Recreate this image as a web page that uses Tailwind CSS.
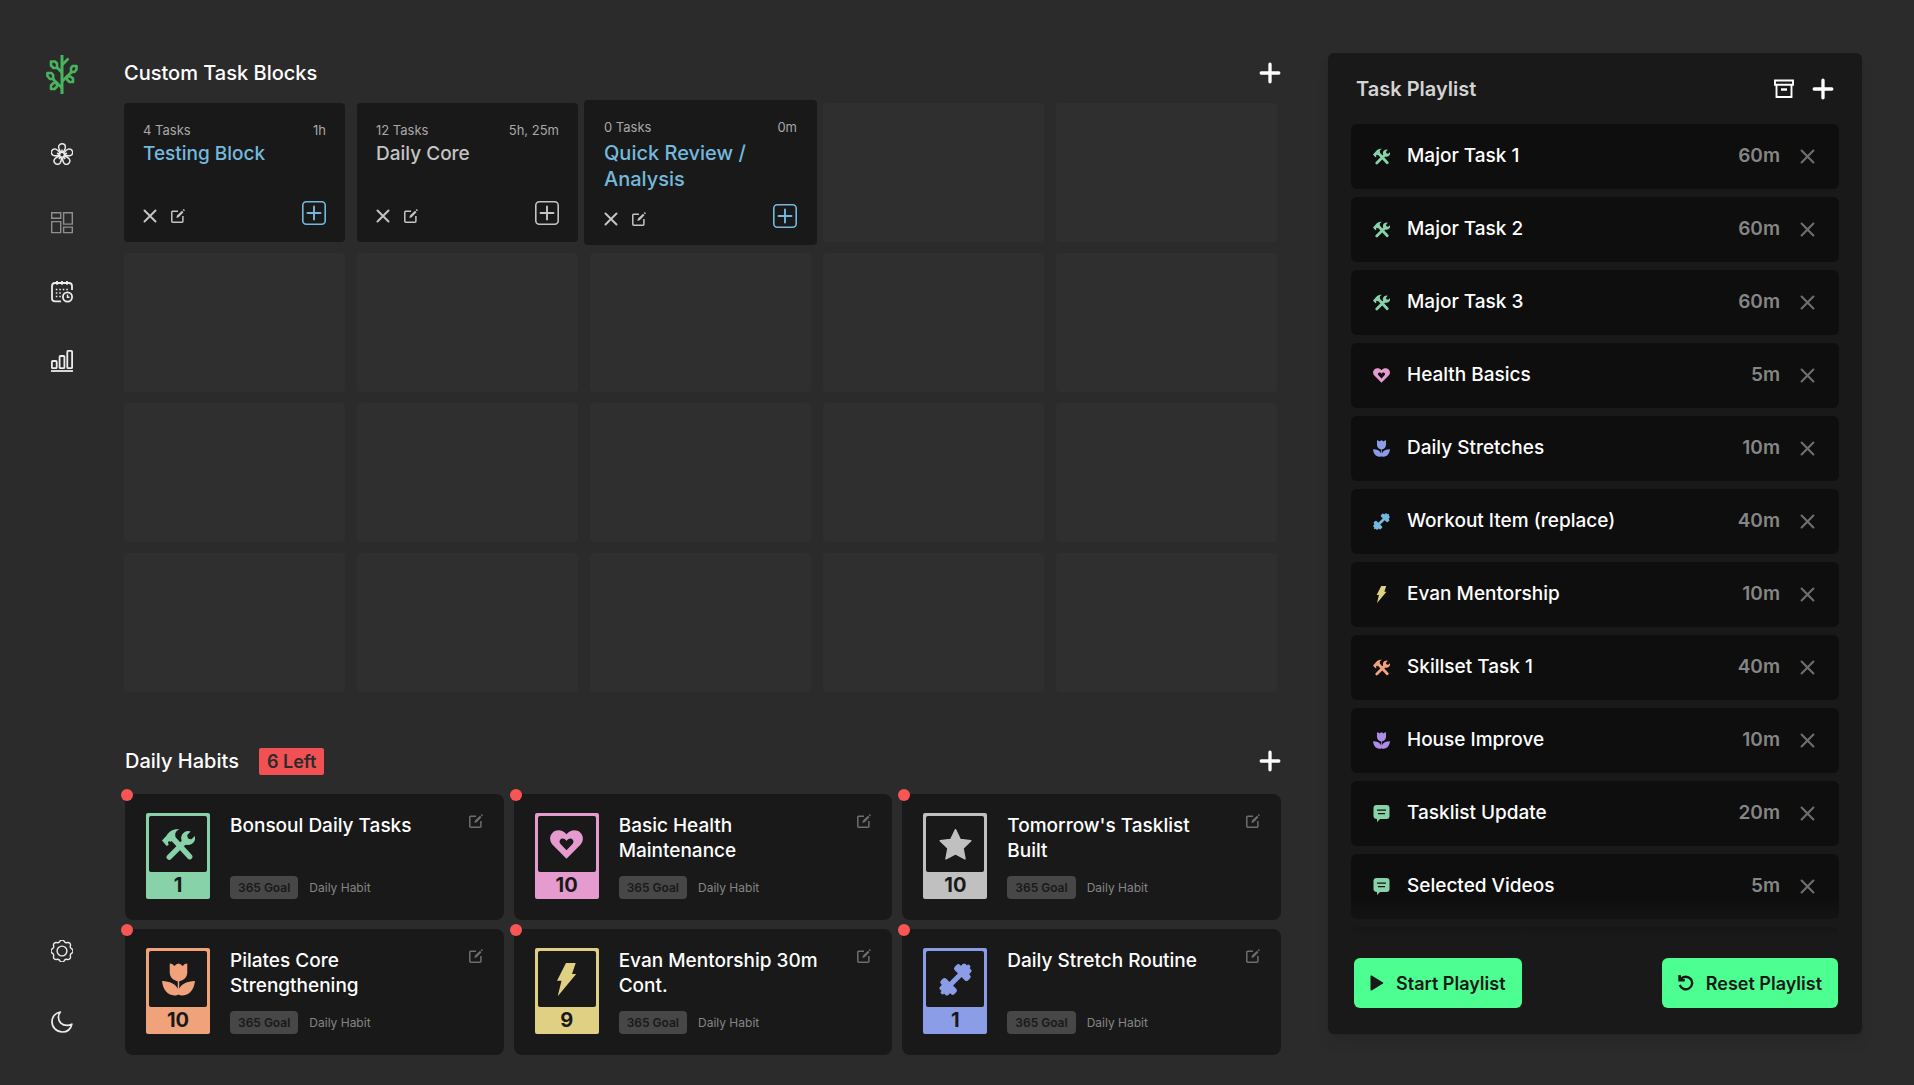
<!doctype html>
<html lang="en">

<head>
  <meta charset="UTF-8" />
  <meta name="viewport" content="width=device-width, initial-scale=1" />
  <title>Task Playlist</title>
  <!-- Tailwind CSS CDN -->
  <script src="https://cdn.jsdelivr.net/npm/@tailwindcss/browser@4"></script>
</head>

<body class="flex h-screen bg-[#2b2b2b] font-['Inter',sans-serif] text-white">
  <!-- Icon sprite -->
  <svg class="hidden">
    <symbol id="i-plus" viewBox="0 0 20 20">
      <path d="M10 2v16M2 10h16" fill="none" stroke="currentColor" stroke-width="3" stroke-linecap="round" />
    </symbol>
    <symbol id="i-x" viewBox="0 0 14 14">
      <path d="M1.500 1.500l11 11M12.500 1.500l-11 11" fill="none" stroke="currentColor" stroke-width="2" stroke-linecap="round" />
    </symbol>
    <symbol id="i-edit" viewBox="0 0 14 14">
      <path d="M7 2.200H1.700Q.8 2.200.8 3.100V12.300Q.8 13.200 1.700 13.200H11Q11.900 13.200 11.900 12.300V7" fill="none" stroke="currentColor" stroke-width="1.500" />
      <path d="M5.300 9l.7-2.400L11 1.700l1.500 1.500L7.700 8.200zM11.700 1l1-1L14 1.300l-1 1z" fill="currentColor" />
    </symbol>
    <symbol id="i-add-box" viewBox="0 0 24 24">
      <rect x=".8" y=".8" width="22.400" height="22.400" rx="3.500" fill="none" stroke="currentColor" stroke-width="1.600" />
      <path d="M12 5.500v13M5.500 12h13" fill="none" stroke="currentColor" stroke-width="1.900" stroke-linecap="round" />
    </symbol>
    <symbol id="i-tools" viewBox="0 0 34 33">
      <path d="M0 12.500L5 7C7 3 12 0 18 1c-4 1.500-5 4-4 8l-5 5-1.500-1-1.300 1 .6 3-2 1z" fill="currentColor" />
      <path d="M11 10l17.500 19M7.500 29.500L25 12" stroke="currentColor" stroke-width="5.600" stroke-linecap="round" />
      <path d="M29.500 3.200L26 6.800l.6 3.800 3.800.6 3.400-3.400A7.200 7.200 0 1 1 29.500 3.200z" fill="currentColor" />
    </symbol>
    <symbol id="i-tulip" viewBox="0 0 32 32">
      <path d="M7.500.5Q10 .5 12 2.800 14 1 16 .5 18 1 20 2.800 22 .5 24.500.5V9c0 5-3.500 8-8.500 9-5-1-8.500-4-8.500-9z" fill="currentColor" />
      <path d="M0 17.500c8 .5 13 2.500 15.300 7.500V17h1.400v8c2.300-5 7.300-7 15.300-7.500-1 8.500-5 13.500-12 14-1.500 0-3-.3-4-1-1 .7-2.500 1-4 1-7-.5-11-5.500-12-14z" fill="currentColor" />
    </symbol>
    <symbol id="i-heart" viewBox="0 0 32 28">
      <path fill-rule="evenodd" d="M16 27.800L2.500 14.200C-.8 10.700-.6 5.500 2.500 2.500 6-.8 12-.8 16 4c4-4.800 10-4.800 13.500-1.500 3.100 3 3.300 8.200 0 11.700zM16 19.500l5.800-5.900c2-2.200.5-5.400-2-5.400-1.700 0-3 1-3.800 2.300C15.200 9.200 13.900 8.200 12.200 8.200c-2.500 0-4 3.200-2 5.400z" fill="currentColor" />
    </symbol>
    <symbol id="i-bolt" viewBox="-7 0 33 33">
      <path d="M9 0h9.700L15 11h4.200L.7 33.300 4.500 17.700H0z" fill="currentColor" />
    </symbol>
    <symbol id="i-star" viewBox="0 0 34 33">
      <path d="M17 1.200l4.800 10 11 1.500-8 7.700 2 11L17 26.200 7.200 31.400l2-11-8-7.700 11-1.500z" fill="currentColor" stroke="currentColor" stroke-width="1.500" stroke-linejoin="round" />
    </symbol>
    <symbol id="i-dumbbell" viewBox="-16.500 -16.500 33 33">
      <g transform="rotate(-45)" fill="currentColor">
        <rect x="-9" y="-2.500" width="18" height="5" />
        <rect x="6" y="-9.500" width="7.500" height="19" rx="2.500" />
        <rect x="11" y="-5.800" width="7" height="11.600" rx="2" />
        <rect x="16" y="-1.800" width="4" height="3.600" rx="1" />
        <rect x="-13.500" y="-9.500" width="7.500" height="19" rx="2.500" />
        <rect x="-18" y="-5.800" width="7" height="11.600" rx="2" />
        <rect x="-20" y="-1.800" width="4" height="3.600" rx="1" />
      </g>
    </symbol>
    <symbol id="i-chat" viewBox="0 0 16 17">
      <path fill-rule="evenodd" d="M3 0h10q3 0 3 3v8q0 3-3 3H6.500L3.500 17v-3Q0 14 0 11V3q0-3 3-3zM3.500 4.500v1.300h9V4.500zM4.500 8v1.300h7V8z" fill="currentColor" />
    </symbol>
    <symbol id="i-archive" viewBox="0 0 20 20">
      <path d="M1 1.500h18v4.300H1zM2.500 6v12h15V6" fill="none" stroke="currentColor" stroke-width="1.900" />
      <path d="M7 10.500h6" stroke="currentColor" stroke-width="2.400" />
    </symbol>
    <symbol id="i-play" viewBox="0 0 14 16">
      <path d="M.5 1.200v13.600q0 1.200 1.200.6L13 8.600q.8-.6 0-1.200L1.700.6Q.5 0 .5 1.200z" fill="currentColor" />
    </symbol>
    <symbol id="i-reset" viewBox="0 0 16 16">
      <path d="M2.800 4.200A6.300 6.300 0 1 1 1.800 9.800" fill="none" stroke="currentColor" stroke-width="2.400" />
      <path d="M.3 0v6.400h6.500V4H3.500L2.700 0z" fill="currentColor" />
    </symbol>
  </svg>

  <!-- Sidebar -->
  <nav class="flex w-[124px] shrink-0 flex-col items-center pt-[55px] pb-[52px] text-[#ececec]">
    <a href="#" aria-label="Home" class="text-[#4bb35c]">
      <svg class="h-[39px] w-8" viewBox="0 0 32 39" fill="none" stroke="currentColor" stroke-width="2.600" stroke-linejoin="round">
        <path d="M16 0v39" stroke-width="3" />
        <path d="M16 10l6.500-6.500M16 17.500l-5.500-5.500M16 33L6.500 23.500M16 26.500L26.500 16" />
        <path d="M5 6.500h4l2 2V13H7.500L5 10.500zM1.400 18h4l1.800 2v4H4L1.400 21zM26.500 11h4v3.500l-2 2.500H25v-4zM5 34v-3.500l2.500-2.500H11v3.500L8.500 34zM21 21.500h3.500l2.500 2V27h-3.500L21 24.500z" />
      </svg>
    </a>
    <div class="mt-[49px] flex flex-col gap-[47px]">
      <a href="#" aria-label="Garden">
        <svg class="size-[22px]" viewBox="0 0 24 24" fill="none" stroke="currentColor" stroke-width="1.600">
          <circle cx="12" cy="12.800" r="2.600" />
          <path id="petal" d="M10.800 10.200C9.500 8.500 8.300 6.500 8.300 4.500 8.300 2.300 10 .8 12 .8s3.700 1.500 3.700 3.700c0 2-1.200 4-2.500 5.700M12 7v3" />
          <use href="#petal" transform="rotate(72 12 12.800)" />
          <use href="#petal" transform="rotate(144 12 12.800)" />
          <use href="#petal" transform="rotate(216 12 12.800)" />
          <use href="#petal" transform="rotate(288 12 12.800)" />
        </svg>
      </a>
      <a href="#" aria-label="Task blocks" class="text-[#8f8f8f]">
        <svg class="size-[22px]" viewBox="0 0 22 22" fill="none" stroke="currentColor" stroke-width="1.400">
          <path d="M.7.700h9v5.500h-9zM.7 9.600h9v11h-9zM12.600.7h8.700v11.400h-8.700zM12.600 15.100h8.700v5.500h-8.700z" />
        </svg>
      </a>
      <a href="#" aria-label="Schedule">
        <svg class="size-[22px]" viewBox="0 0 22 22" fill="none" stroke="currentColor" stroke-width="1.800">
          <path d="M10 20.400H4q-3 0-3-3V5q0-3 3-3h14q3 0 3 3v4M6 0v3.800M11 0v3.800M16 0v3.800" />
          <circle cx="16.500" cy="16" r="4.600" />
          <path d="M16.500 13.500v2.800h2" stroke-width="1.400" />
          <path d="M4.800 8.500h13M4.800 12h6.500M4.800 15.500h5" stroke-dasharray="1.500 2" stroke-width="1.500" />
        </svg>
      </a>
      <a href="#" aria-label="Statistics">
        <svg class="size-[22px]" viewBox="0 0 22 22" fill="none" stroke="currentColor" stroke-width="1.800">
          <path d="M0 21h22" />
          <rect x=".9" y="11" width="4.800" height="7.200" rx=".8" />
          <rect x="8.600" y="6" width="4.800" height="12.200" rx=".8" />
          <rect x="16.300" y=".9" width="4.800" height="17.300" rx=".8" />
        </svg>
      </a>
    </div>
    <div class="mt-auto flex flex-col gap-[49px]">
      <a href="#" aria-label="Settings">
        <svg class="size-[22px]" viewBox="1 1 22 22" fill="none" stroke="currentColor" stroke-width="1.400">
          <circle cx="12" cy="12" r="4.900" />
          <path d="M22.100 10.030A2.600 2.600 0 0 1 22.100 13.970A2.800 2.800 0 0 0 20.540 17.760A2.600 2.600 0 0 1 17.760 20.540A2.800 2.800 0 0 0 13.970 22.100A2.600 2.600 0 0 1 10.030 22.100A2.800 2.800 0 0 0 6.240 20.540A2.600 2.600 0 0 1 3.460 17.760A2.800 2.800 0 0 0 1.900 13.970A2.600 2.600 0 0 1 1.900 10.030A2.800 2.800 0 0 0 3.460 6.240A2.600 2.600 0 0 1 6.240 3.460A2.800 2.800 0 0 0 10.030 1.900A2.600 2.600 0 0 1 13.970 1.900A2.800 2.800 0 0 0 17.760 3.460A2.600 2.600 0 0 1 20.540 6.240A2.800 2.800 0 0 0 22.100 10.030z" />
        </svg>
      </a>
      <button type="button" aria-label="Dark mode">
        <svg class="size-[22px]" viewBox="0 0 22 22" fill="none" stroke="currentColor" stroke-width="1.700" stroke-linejoin="round">
          <path d="M9.300 1C4.500 1.800 1 5.800 1 10.700 1 16.300 5.500 21 11.300 21c4.700 0 8.400-3 9.500-7.800-1.500.8-3 1.200-4.800 1.200-5 0-8.600-3.600-8.600-8.100 0-2 .7-3.800 1.900-5.300z" />
        </svg>
      </button>
    </div>
  </nav>

  <!-- Main Section -->
  <main class="min-w-0 flex-1 pt-[53px]">
    <section>
      <div class="mb-[10px] flex h-10 items-center justify-between">
        <h2 class="text-[20px] font-medium">Custom Task Blocks</h2>
        <button type="button" aria-label="Add block"><svg class="size-[22px]"><use href="#i-plus" /></svg></button>
      </div>
      <div id="blocks" class="mr-1 grid auto-rows-[139px] grid-cols-5 gap-x-3 gap-y-[11px]"></div>
    </section>

    <section class="mt-[49px] ml-px">
      <div class="mb-[13px] flex h-10 items-center">
        <h2 class="text-[20px] font-medium">Daily Habits</h2>
        <span class="ml-5 rounded-xs bg-[#f15152] px-2 text-[18px] leading-[27px] font-semibold text-[#2b2b2b]">6 Left</span>
        <button type="button" aria-label="Add habit" class="ml-auto"><svg class="size-[22px]"><use href="#i-plus" /></svg></button>
      </div>
      <div id="habits" class="grid auto-rows-[126px] grid-cols-3 gap-x-[10px] gap-y-[9px]"></div>
    </section>
  </main>

  <!-- Playlist -->
  <aside class="mt-[53px] mr-[52px] mb-[51px] ml-[47px] flex w-[534px] shrink-0 flex-col rounded-md bg-[#191919] px-[23px] pb-[26px] shadow-lg">
    <div class="flex h-[71px] shrink-0 items-center gap-[18px] px-[5px]">
      <h2 class="mr-auto text-[20px] font-semibold text-[#d4d4d4]">Task Playlist</h2>
      <button type="button" aria-label="Archive"><svg class="size-5"><use href="#i-archive" /></svg></button>
      <button type="button" aria-label="Add task"><svg class="size-[22px]"><use href="#i-plus" /></svg></button>
    </div>
    <div class="relative min-h-0 flex-1 overflow-hidden">
      <ul id="playlist" class="flex flex-col gap-2"></ul>
      <div class="absolute inset-x-0 bottom-0 h-10 bg-linear-to-t from-[#191919] to-[#191919]/0"></div>
    </div>
    <div class="mt-5 flex shrink-0 justify-between pr-px pl-[3px] text-[18px] font-semibold text-[#191919]">
      <button type="button" class="flex h-[50px] items-center gap-3 rounded-md bg-[#4dff91] px-4">
        <svg class="h-4 w-[14px]"><use href="#i-play" /></svg>Start Playlist
      </button>
      <button type="button" class="flex h-[50px] items-center gap-3 rounded-md bg-[#4dff91] px-4">
        <svg class="size-4"><use href="#i-reset" /></svg>Reset Playlist
      </button>
    </div>
  </aside>

  <script>
    const blocks = [
      { title: 'Testing Block', tasks: 4, time: '1h', color: 'text-[#74b9dd]' },
      { title: 'Daily Core', tasks: 12, time: '5h, 25m', color: 'text-[#c4c4c4]' },
      { title: 'Quick Review / Analysis', tasks: 0, time: '0m', color: 'text-[#74b9dd]', active: true },
    ];

    const habits = [
      { title: 'Bonsoul Daily Tasks', icon: 'tools', count: 1, color: 'bg-[#87d2a9] text-[#87d2a9]' },
      { title: 'Basic Health Maintenance', icon: 'heart', count: 10, color: 'bg-[#e59bcd] text-[#e59bcd]' },
      { title: "Tomorrow's Tasklist Built", icon: 'star', count: 10, color: 'bg-[#c0c0c0] text-[#c0c0c0]' },
      { title: 'Pilates Core Strengthening', icon: 'tulip', count: 10, color: 'bg-[#f0a27b] text-[#f0a27b]' },
      { title: 'Evan Mentorship 30m Cont.', icon: 'bolt', count: 9, color: 'bg-[#dfd083] text-[#dfd083]' },
      { title: 'Daily Stretch Routine', icon: 'dumbbell', count: 1, color: 'bg-[#8c9de8] text-[#8c9de8]' },
    ];

    const playlist = [
      { title: 'Major Task 1', time: '60m', icon: 'tools', color: 'text-[#87d2a9]' },
      { title: 'Major Task 2', time: '60m', icon: 'tools', color: 'text-[#87d2a9]' },
      { title: 'Major Task 3', time: '60m', icon: 'tools', color: 'text-[#87d2a9]' },
      { title: 'Health Basics', time: '5m', icon: 'heart', color: 'text-[#e59bcd]' },
      { title: 'Daily Stretches', time: '10m', icon: 'tulip', color: 'text-[#8c9de8]' },
      { title: 'Workout Item (replace)', time: '40m', icon: 'dumbbell', color: 'text-[#74b9dd]' },
      { title: 'Evan Mentorship', time: '10m', icon: 'bolt', color: 'text-[#dfd083]' },
      { title: 'Skillset Task 1', time: '40m', icon: 'tools', color: 'text-[#f0a27b]' },
      { title: 'House Improve', time: '10m', icon: 'tulip', color: 'text-[#ad8ce8]' },
      { title: 'Tasklist Update', time: '20m', icon: 'chat', color: 'text-[#87d2a9]' },
      { title: 'Selected Videos', time: '5m', icon: 'chat', color: 'text-[#87d2a9]' },
    ];

    const blockHtml = b => `
      <article class="flex flex-col rounded-sm bg-[#191919] ${b.active ? '-mx-[6px] -my-[3px] px-5 pt-[18px] pb-[17px]' : 'px-[19px] pt-[18px] pb-[17px]'}">
        <p class="flex justify-between text-[13px] leading-[18px] text-[#a8a8a8]"><span>${b.tasks} Tasks</span><span>${b.time}</span></p>
        <h3 class="${b.active ? 'mt-1 text-[20px]' : 'mt-[2px] text-[19px]'} leading-[26px] font-medium ${b.color}">${b.title}</h3>
        <div class="mt-auto flex items-end gap-[14px] text-[#c4c4c4]">
          <button type="button" aria-label="Delete" class="pb-[2px]"><svg class="size-[14px]"><use href="#i-x" /></svg></button>
          <button type="button" aria-label="Edit" class="pb-[2px]"><svg class="size-[14px]"><use href="#i-edit" /></svg></button>
          <button type="button" aria-label="Add to playlist" class="ml-auto ${b.color}"><svg class="size-6"><use href="#i-add-box" /></svg></button>
        </div>
      </article>`;

    const habitHtml = h => `
      <article class="relative flex rounded-lg bg-[#191919] pt-[19px] pr-[21px] pb-[21px] pl-[21px]">
        <span class="absolute -top-[5px] -left-1 size-3 rounded-full bg-[#f95555]"></span>
        <div class="flex w-16 shrink-0 flex-col rounded-xs p-[3px] pb-0 ${h.color}">
          <div class="flex h-14 items-center justify-center rounded-xs bg-[#191919]"><svg class="size-[33px]"><use href="#i-${h.icon}" /></svg></div>
          <p class="text-center text-[20px] leading-[27px] font-bold text-[#191919]">${h.count}</p>
        </div>
        <div class="ml-5 flex flex-1 flex-col justify-between">
          <h3 class="max-w-[208px] text-[19px] leading-[25px] font-medium">${h.title}</h3>
          <p class="flex items-center gap-[11px] text-[12px] leading-[23px] text-[#858585]">
            <span class="rounded-sm bg-[#474747] px-2 font-semibold text-[#191919]">365 Goal</span>Daily Habit
          </p>
        </div>
        <button type="button" aria-label="Edit" class="mt-px self-start text-[#6e6e6e]"><svg class="size-[14px]"><use href="#i-edit" /></svg></button>
      </article>`;

    const taskHtml = t => `
      <li class="flex h-[65px] shrink-0 items-center rounded-md bg-[#0e0e0e] pr-6 pl-[22px] text-[19px]">
        <svg class="size-[17px] ${t.color}"><use href="#i-${t.icon}" /></svg>
        <span class="ml-[17px] font-medium">${t.title}</span>
        <span class="ml-auto font-semibold text-[#868686]">${t.time}</span>
        <button type="button" aria-label="Remove" class="ml-5 text-[#6e6e6e]"><svg class="size-[15px]"><use href="#i-x" /></svg></button>
      </li>`;

    // 5 x 4 board, the rest are free slots
    const slot = '<div class="rounded-sm bg-[#2f2f2f]"></div>';
    document.getElementById('blocks').innerHTML = blocks.map(blockHtml).join('') + slot.repeat(20 - blocks.length);
    document.getElementById('habits').innerHTML = habits.map(habitHtml).join('');
    document.getElementById('playlist').innerHTML = playlist.map(taskHtml).join('') +
      '<li class="h-[65px] shrink-0 rounded-md bg-[#0e0e0e]"></li>';
  </script>
</body>

</html>
